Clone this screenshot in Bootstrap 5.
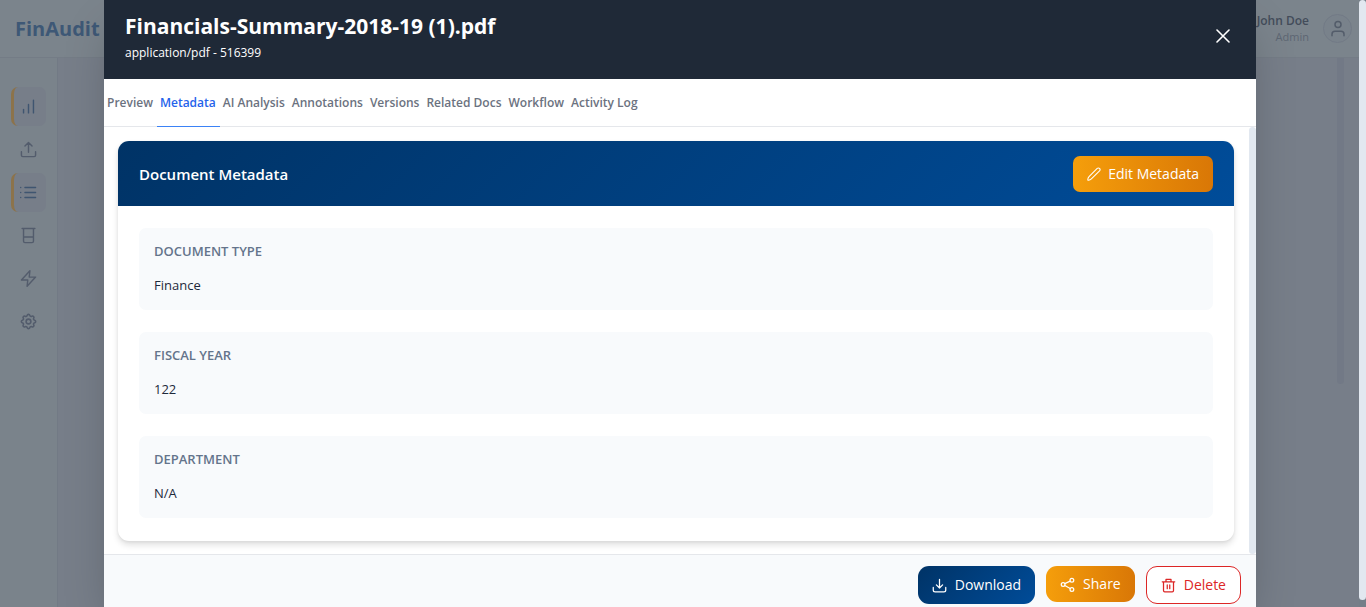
<!DOCTYPE html>
<html lang="en">
<head>
<meta charset="utf-8">
<meta name="viewport" content="width=device-width, initial-scale=1">
<title>FinAudit</title>
<link href="https://cdn.jsdelivr.net/npm/bootstrap@5.3.0/dist/css/bootstrap.min.css" rel="stylesheet">
<style>
  body { font-family: "Open Sans", "Noto Sans", sans-serif; font-size: 13px; line-height: 20px; background: #777e89; color: #1e293b; }
  svg { fill: none; stroke: currentColor; stroke-width: 2; stroke-linecap: round; stroke-linejoin: round; flex: none; display: block; }

  /* Dimmed application behind the dialog */
  .app-header { height: 58px; background: #7b848c; border-bottom: 1px solid #747c86; padding: 0 7px 0 15px; }
  .app-brand { font-size: 20px; font-weight: 700; color: #3e5876; }
  .app-brand:hover { color: #3e5876; }
  .app-user { gap: 14px; }
  .user-name { font-size: 12px; line-height: 16px; font-weight: 600; color: #434c5a; }
  .user-role { font-size: 11px; line-height: 15px; color: #5d6673; }
  .avatar { width: 29px; height: 29px; border: 1px solid #727a86; background: #79828b; color: #535c6a; }
  .app-side { width: 58px; background: #7a838b; border-right: 1px solid #727a85; padding: 29px 11px 0; gap: 4px; }
  .side-link { height: 39px; width: 35px; border-radius: 7px; color: #535c6c; }
  .side-link.active { background: #777e89; border-left: 3px solid #8c734b; color: #3f5570; padding-right: 3px; }
  .app-main { padding-right: 15px; }
  .main-thumb { width: 7px; height: 326px; border-radius: 0 0 4px 4px; background: #727986; }
  .page-bar { width: 7px; background: #747e88; }
  .page-thumb { height: calc(100% - 7px); border-radius: 4px; background: #e2e8f0; }

  /* Dialog */
  .overlay { padding-right: 6px; }
  .doc-dialog { max-width: 1152px; background: #fff; box-shadow: 0 22px 45px -11px rgba(0,0,0,.25); }
  .doc-head { height: 79px; background: #1f2937; padding: 11px 21px 0; }
  .doc-title { font-size: 21px; line-height: 30px; font-weight: 700; }
  .doc-sub { font-size: 12px; line-height: 24px; }
  .doc-close { padding: 5px; margin: 13px 0 0; color: #fff; border: 0; background: none; }
  .doc-tabs { height: 48px; border-bottom: 1px solid #e5e7eb; }
  .doc-tab { border: 0; border-bottom: 1px solid transparent; background: none; margin-bottom: -1px; padding: 0 4px 0 3px; font-size: 12px; font-weight: 600; color: #6b7280; white-space: nowrap; }
  .doc-tab.active { color: #2563eb; border-bottom-color: #3b82f6; }
  .doc-scroll { padding: 14px 15px 13px 14px; }
  .body-thumb { width: 7px; border-radius: 4px; background: #e2e8f0; }
  .meta-card { border-radius: 11px; box-shadow: 0 4px 6px rgba(0,0,0,.12), 0 1px 3px rgba(0,0,0,.06); overflow: hidden; }
  .meta-head { height: 65px; padding: 0 21px; background: linear-gradient(135deg, #003366, #004c99); }
  .meta-title { font-size: 15px; line-height: 22px; font-weight: 600; }
  .meta-list { padding: 22px 21px 23px; gap: 22px; }
  .meta-field { height: 82px; padding: 13px 15px; border-radius: 7px; background: #f8fafc; gap: 14px; }
  .meta-field dt { font-size: 13px; line-height: 20px; font-weight: 600; color: #64748b; }
  .meta-field dd { font-size: 13px; line-height: 20px; color: #1e293b; }
  .doc-foot { border-top: 1px solid #e5e7eb; background: #f8fafc; padding: 11px 15px 3px; gap: 11px; }
  .act { display: flex; align-items: center; justify-content: center; gap: 8px; height: 38px; padding: 0 14px; border: 0; border-radius: 11px; color: #fff; font-size: 14px; line-height: 20px; white-space: nowrap; }
  .act-navy { background: linear-gradient(135deg, #003366, #004c99); }
  .act-amber { height: 36px; background: linear-gradient(90deg, #f59e0b, #d97706); }
  .act-line { background: #fff; color: #dc2626; border: 1px solid #dc2626; }
  .act-edit { border-radius: 7px; gap: 7px; }
</style>
</head>
<body>
<div class="d-flex vh-100 overflow-hidden">
  <div class="d-flex flex-column flex-grow-1">
    <header class="app-header d-flex align-items-center justify-content-between">
      <a class="app-brand text-decoration-none" href="#">FinAudit</a>
      <div class="app-user d-flex align-items-center">
        <div class="text-end">
          <div class="user-name">John Doe</div>
          <div class="user-role">Admin</div>
        </div>
        <div class="avatar rounded-circle d-flex align-items-center justify-content-center">
          <svg width="18" height="18" viewBox="0 0 24 24"><circle cx="12" cy="6" r="4"/><path d="M20 21v-2a4 4 0 0 0-4-4H8a4 4 0 0 0-4 4v2"/></svg>
        </div>
      </div>
    </header>
    <div class="d-flex flex-grow-1">
      <nav class="app-side d-flex flex-column" aria-label="Main">
        <a class="side-link active d-flex align-items-center justify-content-center" href="#" aria-label="Dashboard"><svg width="17" height="17" viewBox="0 0 24 24"><path d="M19 21V3M12 21V9M5 21v-5"/></svg></a>
        <a class="side-link d-flex align-items-center justify-content-center" href="#" aria-label="Upload"><svg width="17" height="17" viewBox="0 0 24 24"><path d="M22 15v5a2 2 0 0 1-2 2H4a2 2 0 0 1-2-2v-5M17 7l-5-5-5 5M12 2v14"/></svg></a>
        <a class="side-link active d-flex align-items-center justify-content-center" href="#" aria-label="Documents"><svg width="17" height="17" viewBox="0 0 24 24"><path d="M7 5h15M7 12h15M7 19h15M1 5h.01M1 12h.01M1 19h.01"/></svg></a>
        <a class="side-link d-flex align-items-center justify-content-center" href="#" aria-label="Archive"><svg width="17" height="17" viewBox="0 0 24 24"><path d="M3 2h18M5 2v18a2 2 0 0 0 2 2h10a2 2 0 0 0 2-2V2M5 14h14"/></svg></a>
        <a class="side-link d-flex align-items-center justify-content-center" href="#" aria-label="Automation"><svg width="17" height="17" viewBox="0 0 24 24"><path d="M14 1 2 14h9l-1 9L22 10h-9z"/></svg></a>
        <a class="side-link d-flex align-items-center justify-content-center" href="#" aria-label="Settings"><svg width="19" height="19" viewBox="0 0 24 24"><circle cx="12" cy="12" r="3"/><path d="M10.3 4.3c.4-1.800 3-1.800 3.400 0a1.700 1.700 0 0 0 2.600 1.100c1.500-1 3.300.8 2.300 2.300a1.700 1.700 0 0 0 1.100 2.600c1.800.4 1.800 3 0 3.400a1.700 1.700 0 0 0-1.100 2.600c1 1.500-.8 3.300-2.300 2.300a1.700 1.700 0 0 0-2.600 1.100c-.4 1.800-3 1.800-3.400 0a1.700 1.700 0 0 0-2.600-1.100c-1.500 1-3.300-.8-2.300-2.300a1.700 1.700 0 0 0-1.100-2.600c-1.800-.4-1.800-3 0-3.400a1.700 1.700 0 0 0 1.100-2.600c-1-1.500.8-3.300 2.300-2.300a1.700 1.700 0 0 0 2.600-1.100z"/></svg></a>
      </nav>
      <main class="app-main flex-grow-1 d-flex justify-content-end"><div class="main-thumb"></div></main>
    </div>
  </div>
  <div class="page-bar"><div class="page-thumb"></div></div>
</div>

<div class="overlay position-absolute top-0 start-0 w-100 vh-100 d-flex justify-content-center pe-none">
  <section class="doc-dialog w-100 h-100 d-flex flex-column overflow-hidden pe-auto" role="dialog" aria-labelledby="doc-title">
    <header class="doc-head d-flex justify-content-between align-items-start text-white">
      <div>
        <h2 class="doc-title m-0" id="doc-title">Financials-Summary-2018-19 (1).pdf</h2>
        <p class="doc-sub m-0">application/pdf - 516399</p>
      </div>
      <button class="doc-close" type="button" aria-label="Close"><svg width="14" height="14" viewBox="0 0 14 14"><path d="m1 1 12 12M13 1 1 13" stroke-width="1.6"/></svg></button>
    </header>
    <nav class="doc-tabs d-flex flex-shrink-0" aria-label="Document sections">
      <button class="doc-tab" type="button">Preview</button>
      <button class="doc-tab active" type="button">Metadata</button>
      <button class="doc-tab" type="button">AI Analysis</button>
      <button class="doc-tab" type="button">Annotations</button>
      <button class="doc-tab" type="button">Versions</button>
      <button class="doc-tab" type="button">Related Docs</button>
      <button class="doc-tab" type="button">Workflow</button>
      <button class="doc-tab" type="button">Activity Log</button>
    </nav>
    <div class="d-flex flex-shrink-0">
      <div class="doc-scroll flex-grow-1">
        <div class="meta-card bg-white">
          <div class="meta-head d-flex align-items-center justify-content-between">
            <h3 class="meta-title m-0 text-white">Document Metadata</h3>
            <button class="act act-amber act-edit" type="button"><svg width="14" height="14" viewBox="0 0 24 24"><path d="M17.500 2.500a2.800 2.800 0 0 1 4 4L7.500 20.500Q5 23 1.500 22.500 1 19 3.500 16.500z" stroke-width="1.8"/></svg>Edit Metadata</button>
          </div>
          <dl class="meta-list d-flex flex-column m-0">
            <div class="meta-field d-flex flex-column"><dt>DOCUMENT TYPE</dt><dd class="m-0">Finance</dd></div>
            <div class="meta-field d-flex flex-column"><dt>FISCAL YEAR</dt><dd class="m-0">122</dd></div>
            <div class="meta-field d-flex flex-column"><dt>DEPARTMENT</dt><dd class="m-0">N/A</dd></div>
          </dl>
        </div>
      </div>
      <div class="body-thumb"></div>
    </div>
    <footer class="doc-foot d-flex flex-grow-1 justify-content-end align-items-start">
      <button class="act act-navy" type="button"><svg width="15" height="15" viewBox="0 0 24 24"><path d="M22 15v4a3 3 0 0 1-3 3H5a3 3 0 0 1-3-3v-4M7 11l5 5 5-5M12 16V2"/></svg>Download</button>
      <button class="act act-amber" type="button"><svg width="15" height="15" viewBox="0 0 24 24"><circle cx="19" cy="5" r="3"/><circle cx="5" cy="12" r="3"/><circle cx="19" cy="20" r="3"/><path d="m7.700 13.500 8.600 5M16.300 6.500l-8.600 4"/></svg>Share</button>
      <button class="act act-line" type="button"><svg width="15" height="15" viewBox="0 0 24 24"><path d="M2 6h20M4 6v14a2 2 0 0 0 2 2h12a2 2 0 0 0 2-2V6M8 6V2h8v4M10 11v6M14 11v6"/></svg>Delete</button>
    </footer>
  </section>
</div>
<script src="https://cdn.jsdelivr.net/npm/bootstrap@5.3.0/dist/js/bootstrap.bundle.min.js"></script>
</body>
</html>
